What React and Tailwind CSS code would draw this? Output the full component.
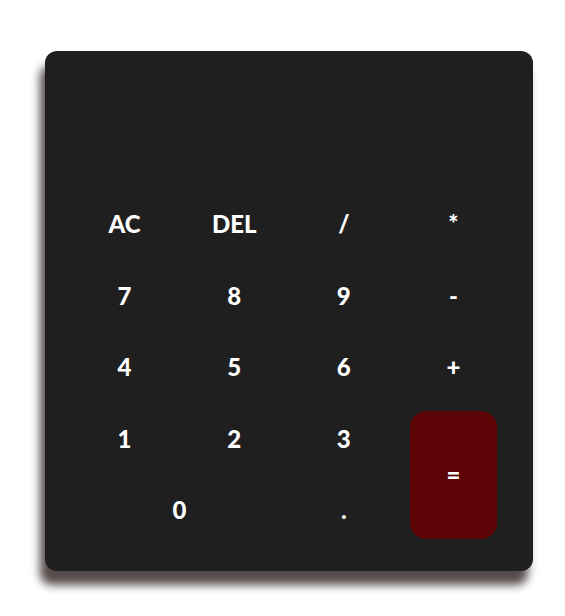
import React, { useState } from "react";

const keys = [
    { label: "AC" },
    { label: "DEL" },
    { label: "/" },
    { label: "*" },
    { label: "7" },
    { label: "8" },
    { label: "9" },
    { label: "-" },
    { label: "4" },
    { label: "5" },
    { label: "6" },
    { label: "+" },
    { label: "1" },
    { label: "2" },
    { label: "3" },
    { label: "=", className: "row-span-2 bg-[#5c0306]" },
    { label: "0", className: "col-span-2" },
    { label: "." },
];

function App() {
    const [display, setDisplay] = useState("");

    const press = (k) => {
        if (k === "AC") return setDisplay("");
        if (k === "DEL") return setDisplay(display.slice(0, -1));
        if (k === "=") return;
        setDisplay(display + k);
    };

    return (
        <div className="min-h-screen bg-white pt-[51px] pl-[45px]">
            <div
                className="w-[488px] h-[520px] bg-[#1f1f1f] rounded-xl px-[36px] pb-[32px] flex flex-col shadow-[-5px_14px_10px_#554b4a]"
                style={{ fontFamily: "Lato, 'Open Sans', sans-serif" }}
            >
                {/* Display */}
                <div className="h-[145px] flex items-end justify-end pb-4 text-white text-3xl">
                    {display}
                </div>

                {/* Keys */}
                <div className="grid grid-cols-4 auto-rows-[56.5px] gap-x-[22.5px] gap-y-[15px]">
                    {keys.map((k) => (
                        <button
                            key={k.label}
                            onClick={() => press(k.label)}
                            className={`flex items-center justify-center rounded-2xl text-white text-[24px] font-black ${k.className || ""}`}
                        >
                            {k.label}
                        </button>
                    ))}
                </div>
            </div>
        </div>
    );
}

export default App;
